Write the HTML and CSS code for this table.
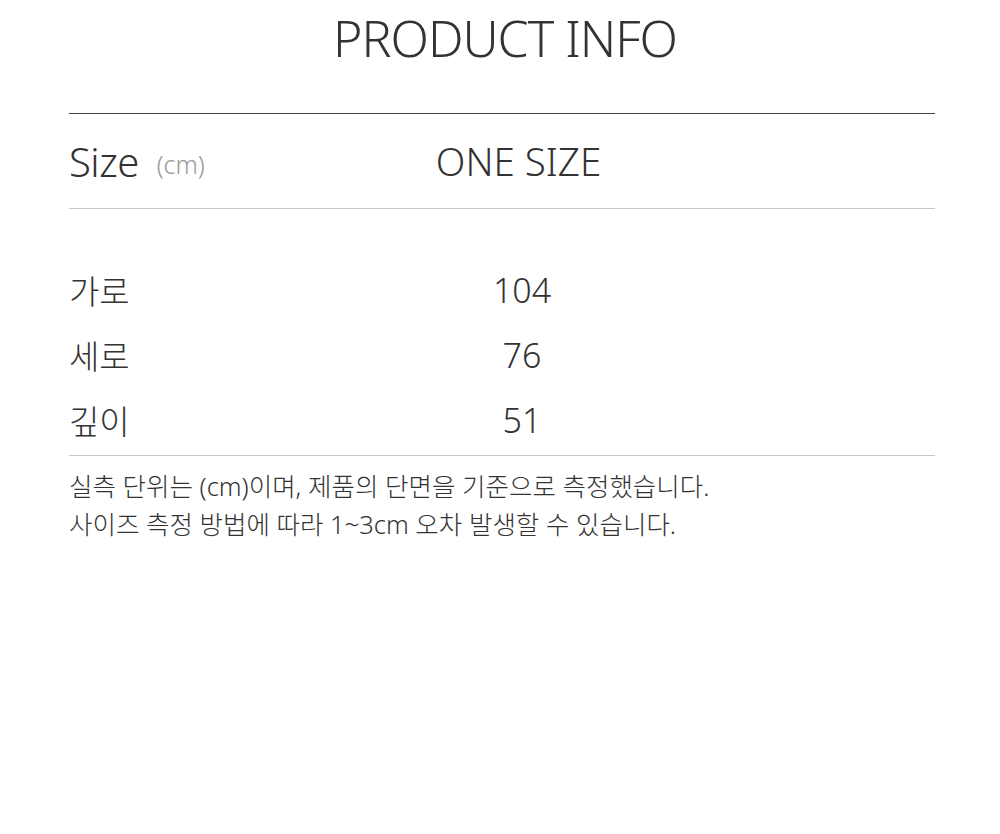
FILE: index.html
```html
<!DOCTYPE html>
<html lang="ko">
<head>
<meta charset="utf-8">
<link rel="stylesheet" href="styles.css">
</head>
<body>
<div class="page">
  <h1 class="title">PRODUCT INFO</h1>
  <div class="table">
    <div class="head">
      <div class="label">Size <span class="unit">(cm)</span></div>
      <div class="value">ONE SIZE</div>
    </div>
    <div class="rows">
      <div class="row"><div class="label">가로</div><div class="value">104</div></div>
      <div class="row"><div class="label">세로</div><div class="value">76</div></div>
      <div class="row"><div class="label">깊이</div><div class="value">51</div></div>
    </div>
  </div>
  <div class="notes">
    <p>실측 단위는 (cm)이며, 제품의 단면을 기준으로 측정했습니다.</p>
    <p>사이즈 측정 방법에 따라 1~3cm 오차 발생할 수 있습니다.</p>
  </div>
</div>
</body>
</html>
```
FILE: styles.css
```css
html, body {
  margin: 0;
  padding: 0;
  background: #fff;
}
body {
  font-family: "Noto Sans", "Noto Sans CJK KR", sans-serif;
  color: #333;
}
.page {
  width: 866px;
  margin: 0 0 0 69px;
}
.title {
  margin: 0 0 37px;
  height: 76px;
  line-height: 76px;
  font-size: 50px;
  font-weight: 300;
  text-align: center;
  color: #333;
  padding-left: 6px;
  letter-spacing: -1px;
}
.table {
  border-top: 1px solid #444;
  border-bottom: 1px solid #c8c8c8;
}
.head, .row {
  display: grid;
  grid-template-columns: 331px 240px 1fr;
  align-items: center;
}
.head {
  height: 94px;
  border-bottom: 1px solid #c8c8c8;
}
.head .label {
  font-size: 40px;
  font-weight: 300;
  letter-spacing: -0.5px;
}
.head .unit {
  font-size: 25px;
  color: #999;
  margin-left: 8px;
  vertical-align: 3px;
  letter-spacing: 0;
}
.head .value {
  font-size: 38.5px;
  font-weight: 300;
  text-align: center;
  margin-left: -3px;
}
.rows {
  padding: 48px 0 3px;
}
.row {
  height: 65px;
}
.row .label {
  font-size: 33px;
  font-weight: 300;
}
.row .value {
  font-size: 34px;
  font-weight: 300;
  text-align: center;
  margin-left: 4px;
}
.notes {
  margin-top: 11px;
}
.notes p {
  margin: 0;
  font-size: 25.5px;
  line-height: 38px;
  font-weight: 300;
  letter-spacing: 0;
}
```
